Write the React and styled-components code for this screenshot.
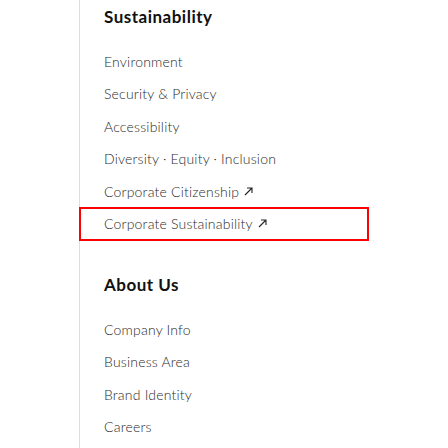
import React from "react";
import styled, { createGlobalStyle } from "styled-components";

const Global = createGlobalStyle`
  html, body { margin: 0; padding: 0; background: #fff; }
  body { font-family: Lato, "Noto Sans", Arial, sans-serif; }
`;

const Nav = styled.nav`
  margin-left: 79px;
  width: 289px;
  min-height: 448px;
  border-left: 1px solid #dcdcdc;
  padding-top: 5px;
  box-sizing: border-box;
  display: flex;
  flex-direction: column;
  gap: 33px;
`;

const Section = styled.section`
  display: flex;
  flex-direction: column;
  gap: 16px;
`;

const Title = styled.h2`
  margin: 0;
  padding-left: 24px;
  font-size: 17px;
  line-height: 24px;
  font-weight: 700;
  color: #111;
  letter-spacing: 0.5px;
`;

const List = styled.ul`
  list-style: none;
  margin: 0;
  padding: 0;
`;

const Item = styled.li`
  display: flex;
  align-items: center;
  gap: 5px;
  height: 32.5px;
  padding-left: 24px;
  font-size: 14px;
  font-weight: 300;
  letter-spacing: 0.2px;
  color: #2a2a2a;
  box-sizing: border-box;
  outline: ${(p) => (p.$focused ? "2px solid #ff0000" : "none")};
  outline-offset: -1px;
`;

const Arrow = () => (
  <svg width="9" height="9" viewBox="0 0 9 9" fill="none" stroke="#222" strokeWidth="1.1">
    <path d="M1 8 L8 1 M3 1 H8 V6" />
  </svg>
);

const sections = [
  {
    title: "Sustainability",
    items: [
      { label: "Environment" },
      { label: "Security & Privacy" },
      { label: "Accessibility" },
      { label: "Diversity · Equity · Inclusion" },
      { label: "Corporate Citizenship", ext: true },
      { label: "Corporate Sustainability", ext: true, focused: true },
    ],
  },
  {
    title: "About Us",
    items: [
      { label: "Company Info" },
      { label: "Business Area" },
      { label: "Brand Identity" },
      { label: "Careers" },
    ],
  },
];

export default function App() {
  return (
    <>
      <Global />
      <Nav>
        {sections.map((s) => (
          <Section key={s.title}>
            <Title>{s.title}</Title>
            <List>
              {s.items.map((it) => (
                <Item key={it.label} $focused={it.focused}>
                  {it.label}
                  {it.ext && <Arrow />}
                </Item>
              ))}
            </List>
          </Section>
        ))}
      </Nav>
    </>
  );
}
